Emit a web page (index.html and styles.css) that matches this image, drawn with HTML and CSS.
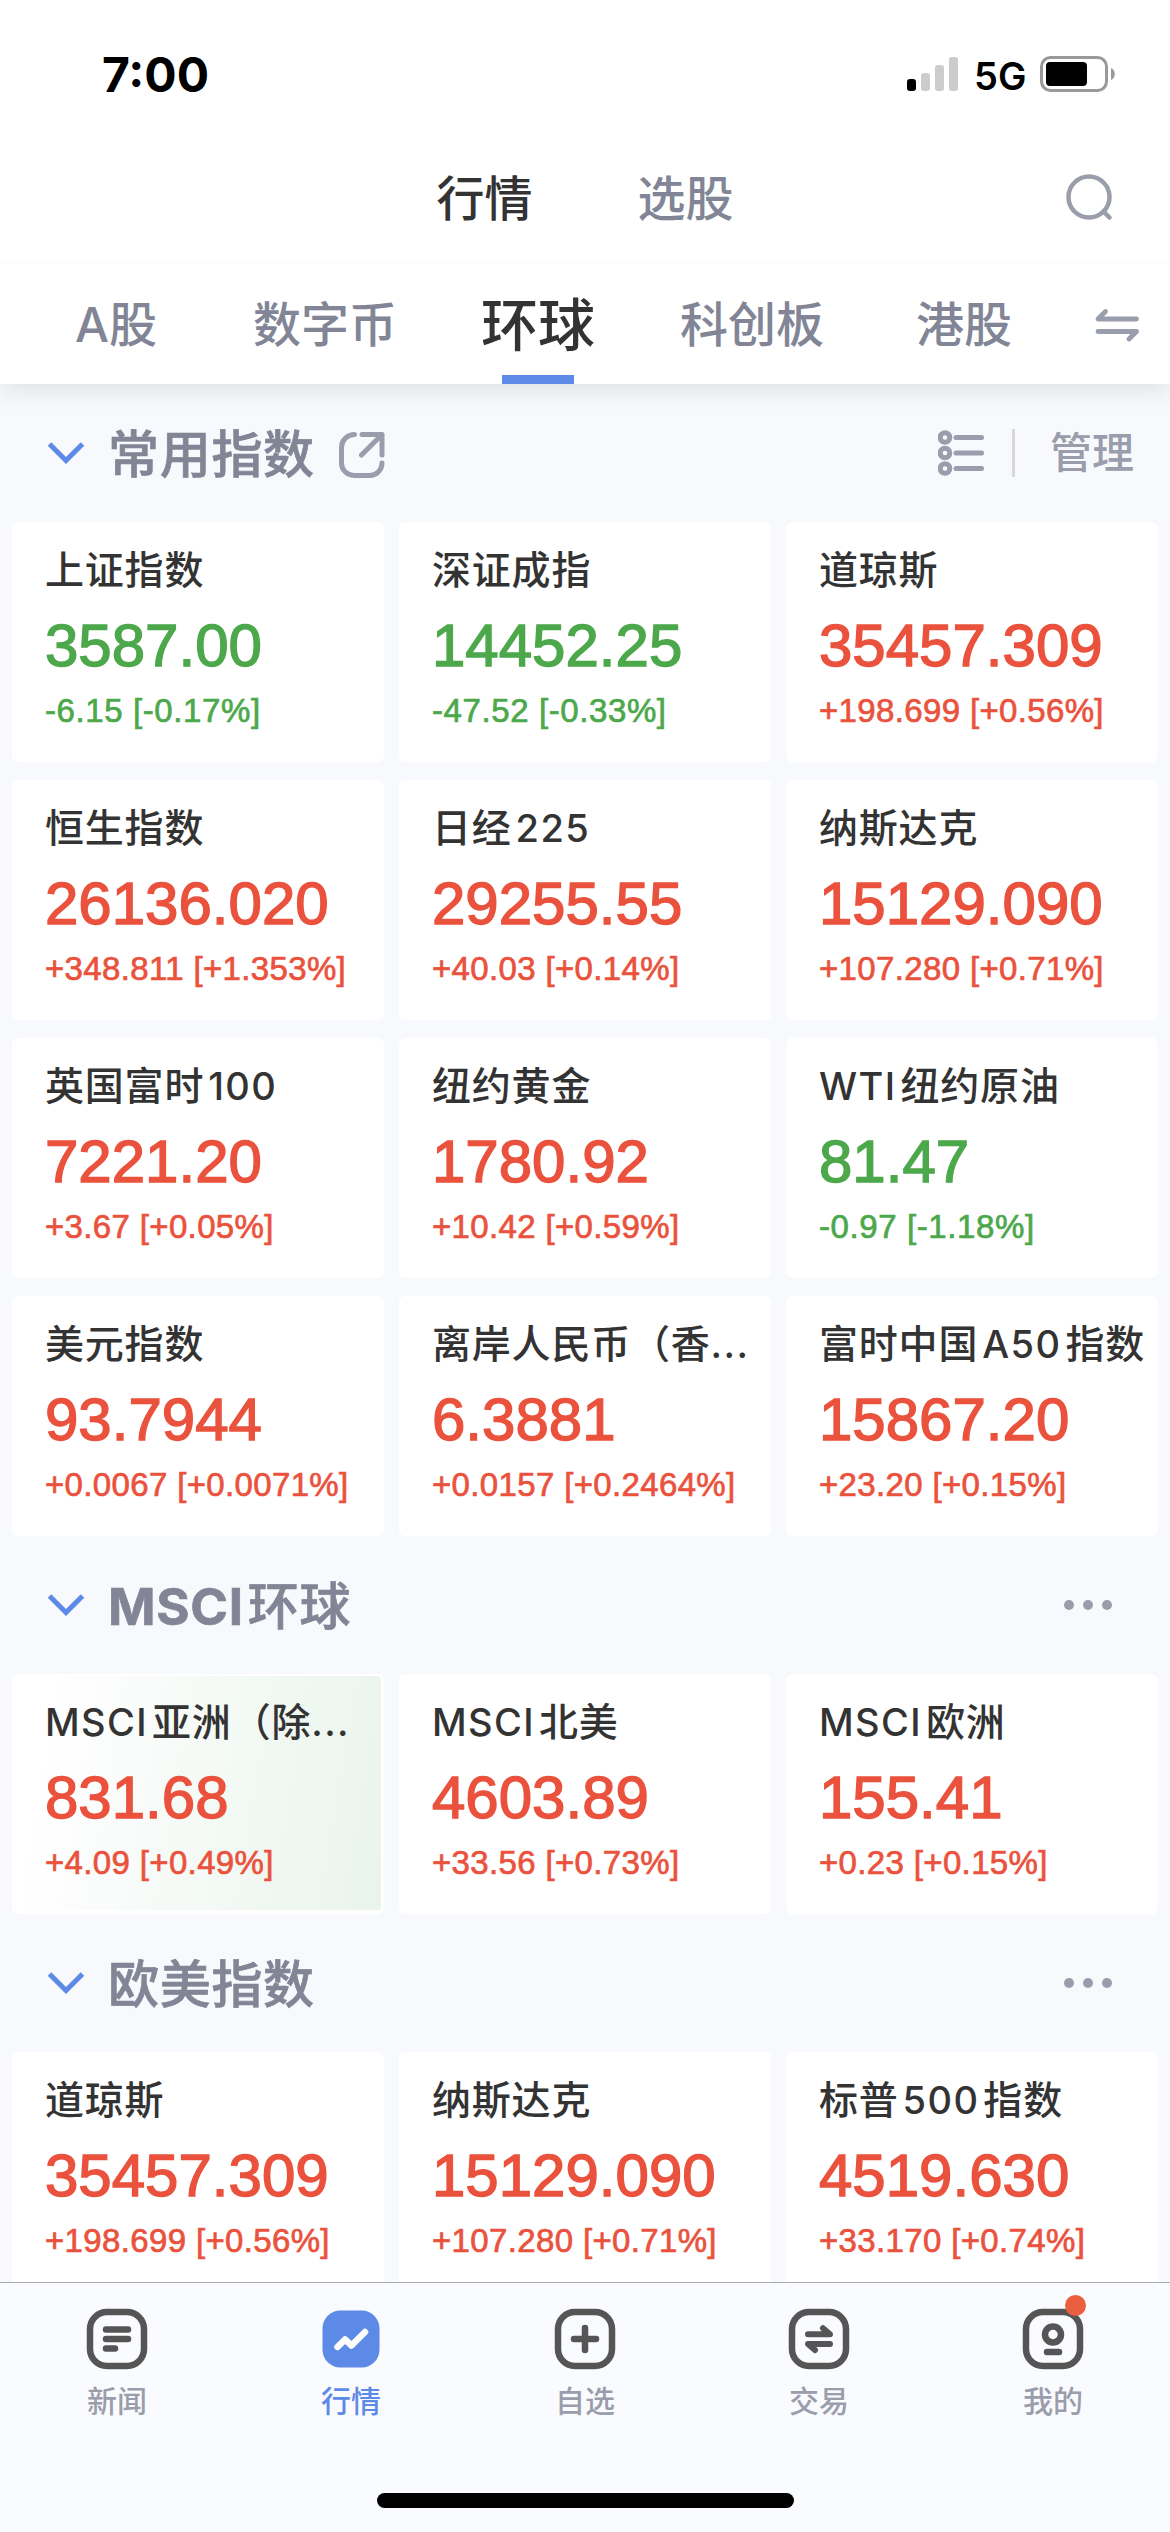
FILE: index.html
```
<!DOCTYPE html>
<html lang="zh-CN">
<head>
    <meta charset="UTF-8">
    <meta name="viewport" content="width=device-width, initial-scale=1.0">
    <title>行情</title>
    <link rel="stylesheet" href="styles.css">
</head>
<body>
<div class="app">
    <div class="status">
        <span class="time">7:00</span>
        <div class="status-right">
            <svg class="signal" width="51" height="34" viewBox="0 0 51 34">
                <rect x="0" y="22" width="9" height="12" rx="3" fill="#000"/>
                <rect x="14" y="16" width="9" height="18" rx="3" fill="#ccc"/>
                <rect x="28" y="8" width="9" height="26" rx="3" fill="#ccc"/>
                <rect x="42" y="0" width="9" height="34" rx="3" fill="#ccc"/>
            </svg>
            <span class="net">5G</span>
            <svg class="battery" width="75" height="36" viewBox="0 0 75 36">
                <rect x="1.5" y="1.5" width="65" height="33" rx="9" fill="none" stroke="#999" stroke-width="3"/>
                <rect x="6" y="6" width="41" height="24" rx="4" fill="#000"/>
                <path d="M71 12c5 2 5 10 0 12z" fill="#999"/>
            </svg>
        </div>
    </div>

    <div class="nav">
        <span class="nav-item active">行情</span>
        <span class="nav-item">选股</span>
        <svg class="search" width="48" height="48" viewBox="0 0 48 48" fill="none" stroke="#9a9dab" stroke-width="4.5" stroke-linecap="round">
            <circle cx="24" cy="23" r="20.500"/>
            <path d="M38.500 37.500L44.500 43.500"/>
        </svg>
    </div>

    <div class="tabs">
        <span class="tab"><span class="en">A</span>股</span>
        <span class="tab">数字币</span>
        <span class="tab active">环球</span>
        <span class="tab">科创板</span>
        <span class="tab">港股</span>
        <svg class="swap" width="46" height="36" viewBox="0 0 46 36" fill="none" stroke="#9a9dab" stroke-width="4.8" stroke-linecap="round" stroke-linejoin="round">
            <path d="M42.500 13H4L11.500 5.500"/>
            <path d="M4 25.500H42.500L35 33"/>
        </svg>
    </div>

    <div class="main">
        <div class="section-head">
            <svg class="arrow" width="38" height="24" viewBox="0 0 38 24"><path d="M2.500 3L19 19.500L35.500 3"/></svg>
            <h2>常用指数</h2>
            <svg class="open" width="46" height="46" viewBox="0 0 46 46">
                <path d="M15.500 2.500A13 13 0 0 0 2.500 15.500V31A12.500 12.500 0 0 0 15 43.500H31A12.500 12.500 0 0 0 43 31"/>
                <path d="M23 2.500H43V23M43 2.500L22.500 23"/>
            </svg>
            <div class="tools">
                <svg class="list" width="46" height="46" viewBox="0 0 46 46">
                    <circle cx="7" cy="7.500" r="4.800"/><circle cx="7" cy="23" r="4.800"/><circle cx="7" cy="38.500" r="4.800"/>
                    <path d="M18 7.500H43.500M18 23H43.500M18 38.500H43.500"/>
                </svg>
                <span class="line"></span>
                <span class="manage">管理</span>
            </div>
        </div>
        <div class="grid">
            <div class="card down"><div class="name">上证指数</div><div class="price">3587.00</div><div class="change">-6.15 [-0.17%]</div></div>
            <div class="card down"><div class="name">深证成指</div><div class="price">14452.25</div><div class="change">-47.52 [-0.33%]</div></div>
            <div class="card"><div class="name">道琼斯</div><div class="price">35457.309</div><div class="change">+198.699 [+0.56%]</div></div>
            <div class="card"><div class="name">恒生指数</div><div class="price">26136.020</div><div class="change">+348.811 [+1.353%]</div></div>
            <div class="card"><div class="name">日经<span class="en gap-l">225</span></div><div class="price">29255.55</div><div class="change">+40.03 [+0.14%]</div></div>
            <div class="card"><div class="name">纳斯达克</div><div class="price">15129.090</div><div class="change">+107.280 [+0.71%]</div></div>
            <div class="card"><div class="name">英国富时<span class="en gap-l">100</span></div><div class="price">7221.20</div><div class="change">+3.67 [+0.05%]</div></div>
            <div class="card"><div class="name">纽约黄金</div><div class="price">1780.92</div><div class="change">+10.42 [+0.59%]</div></div>
            <div class="card down"><div class="name"><span class="en gap-r">WTI</span>纽约原油</div><div class="price">81.47</div><div class="change">-0.97 [-1.18%]</div></div>
            <div class="card"><div class="name">美元指数</div><div class="price">93.7944</div><div class="change">+0.0067 [+0.0071%]</div></div>
            <div class="card"><div class="name">离岸人民币（香<span class="en">...</span></div><div class="price">6.3881</div><div class="change">+0.0157 [+0.2464%]</div></div>
            <div class="card"><div class="name">富时中国<span class="en gap-l gap-r">A50</span>指数</div><div class="price">15867.20</div><div class="change">+23.20 [+0.15%]</div></div>
        </div>

        <div class="section-head">
            <svg class="arrow" width="38" height="24" viewBox="0 0 38 24"><path d="M2.500 3L19 19.500L35.500 3"/></svg>
            <h2><span class="en gap-r">MSCI</span>环球</h2>
            <div class="more"><i></i><i></i><i></i></div>
        </div>
        <div class="grid">
            <div class="card flash"><div class="name"><span class="en gap-r">MSCI</span>亚洲（除<span class="en">...</span></div><div class="price">831.68</div><div class="change">+4.09 [+0.49%]</div></div>
            <div class="card"><div class="name"><span class="en gap-r">MSCI</span>北美</div><div class="price">4603.89</div><div class="change">+33.56 [+0.73%]</div></div>
            <div class="card"><div class="name"><span class="en gap-r">MSCI</span>欧洲</div><div class="price">155.41</div><div class="change">+0.23 [+0.15%]</div></div>
        </div>

        <div class="section-head">
            <svg class="arrow" width="38" height="24" viewBox="0 0 38 24"><path d="M2.500 3L19 19.500L35.500 3"/></svg>
            <h2>欧美指数</h2>
            <div class="more"><i></i><i></i><i></i></div>
        </div>
        <div class="grid">
            <div class="card"><div class="name">道琼斯</div><div class="price">35457.309</div><div class="change">+198.699 [+0.56%]</div></div>
            <div class="card"><div class="name">纳斯达克</div><div class="price">15129.090</div><div class="change">+107.280 [+0.71%]</div></div>
            <div class="card"><div class="name">标普<span class="en gap-l gap-r">500</span>指数</div><div class="price">4519.630</div><div class="change">+33.170 [+0.74%]</div></div>
        </div>
    </div>

    <div class="tabbar">
        <div class="bar-items">
            <div class="bar-item">
                <svg width="62" height="62" viewBox="0 0 62 62">
                    <rect x="4" y="4" width="54" height="54" rx="17"/>
                    <path d="M20 21.500H42M20 31H42M20 40.500H29"/>
                </svg>
                <span>新闻</span>
            </div>
            <div class="bar-item active">
                <svg width="62" height="62" viewBox="0 0 62 62">
                    <rect x="2.500" y="2.500" width="57" height="57" rx="18"/>
                    <path d="M17.500 39L25 31.500L31.500 37.500L45 24"/>
                </svg>
                <span>行情</span>
            </div>
            <div class="bar-item">
                <svg width="62" height="62" viewBox="0 0 62 62">
                    <rect x="4" y="4" width="54" height="54" rx="17"/>
                    <path d="M31 20V42M20 31H42"/>
                </svg>
                <span>自选</span>
            </div>
            <div class="bar-item">
                <svg width="62" height="62" viewBox="0 0 62 62">
                    <rect x="4" y="4" width="54" height="54" rx="17"/>
                    <path stroke-width="6" d="M20 26.300H42L35 20.300M42 36H20L27 42"/>
                </svg>
                <span>交易</span>
            </div>
            <div class="bar-item">
                <svg width="62" height="62" viewBox="0 0 62 62">
                    <rect x="4" y="4" width="54" height="54" rx="17"/>
                    <circle cx="31" cy="26.500" r="8"/>
                    <path d="M25 44H37"/>
                </svg>
                <span>我的</span>
                <i class="dot"></i>
            </div>
        </div>
        <div class="home"></div>
    </div>
</div>
</body>
</html>
```
FILE: styles.css
```
* {
    box-sizing: border-box;
}
body {
    margin: 0;
    background-color: #f8f9fc;
    font-family: "Noto Sans CJK SC", sans-serif;
}
svg {
    display: block;
    flex: none;
}
.app {
    width: 1170px;
    height: 2532px;
    display: flex;
    flex-direction: column;
    overflow: hidden;
}
.en {
    font-family: Inter, "Liberation Sans", sans-serif;
}
.gap-l {
    margin-left: 4px;
}
.gap-r {
    margin-right: 4px;
}

/* 状态栏 */
.status {
    height: 134px;
    background: #fff;
    display: flex;
    justify-content: space-between;
    align-items: center;
    padding: 14px 55px 0 102px;
    font-family: Inter, sans-serif;
    color: #000;
}
.time {
    font-size: 48px;
    font-weight: 700;
}
.status-right {
    display: flex;
    align-items: center;
}
.net {
    font-size: 38px;
    font-weight: 600;
    width: 82px;
    padding-left: 16px;
    line-height: 40px;
    margin-top: 4px;
}

/* 顶部导航 */
.nav {
    position: relative;
    height: 128px;
    background: #fff;
    display: flex;
    justify-content: center;
    align-items: center;
    gap: 105px;
    padding-bottom: 6px;
    font-size: 48px;
    font-weight: 500;
    color: #818595;
    z-index: 2;
}
.nav-item.active {
    color: #333;
}
.search {
    position: absolute;
    right: 57px;
    top: 40px;
}

/* 市场分类 */
.tabs {
    position: relative;
    height: 122px;
    background: #fff;
    display: flex;
    align-items: center;
    padding-left: 75px;
    font-size: 48px;
    font-weight: 500;
    color: #818595;
    border-top: 1px solid #fbfbfb;
    box-shadow: 0 6px 24px rgba(0, 0, 0, 0.1);
    z-index: 1;
}
.tab {
    height: 100%;
    line-height: 116px;
    margin-right: 96px;
    white-space: nowrap;
}
.tab:nth-child(2) {
    margin-right: 84px;
}
.tab.active {
    position: relative;
    font-size: 57px;
    color: #333;
    margin-right: 85px;
}
.tab:nth-child(4) {
    margin-right: 92px;
}
.tab:nth-child(5) {
    margin-right: 82px;
}
.tab.active::after {
    content: "";
    position: absolute;
    left: 50%;
    bottom: 0;
    width: 72px;
    height: 9px;
    margin-left: -36px;
    background: #5c8ae6;
}

.main {
    flex: 1;
    min-height: 0;
    overflow: hidden;
}
.section-head {
    height: 138px;
    display: flex;
    align-items: center;
    padding: 0 36px 0 47px;
}
.section-head h2 {
    margin: 0 24px 5px 23px;
    font-size: 51px;
    font-weight: 500;
    letter-spacing: 0.7px;
    -webkit-text-stroke: 0.7px currentColor;
    color: #818595;
}
.section-head .en {
    font-size: 51px;
    font-weight: 700;
}
.arrow {
    fill: none;
    stroke: #5c8ae6;
    stroke-width: 5;
}
.open {
    fill: none;
    stroke: #9a9dab;
    stroke-width: 5;
    stroke-linecap: round;
    stroke-linejoin: round;
    margin-top: 3px;
}
.list {
    fill: none;
    stroke: #9a9dab;
    stroke-width: 5;
    stroke-linecap: round;
}
.tools {
    margin-left: auto;
    display: flex;
    align-items: center;
}
.line {
    width: 3px;
    height: 48px;
    background: #d8d8d8;
    margin: 0 35px 0 28px;
}
.manage {
    margin-bottom: 6px;
    font-size: 42px;
    line-height: 60px;
    font-weight: 500;
    color: #9a9dab;
}
.more {
    margin-left: auto;
    margin-right: 22px;
    display: flex;
    gap: 9px;
}
.more i {
    width: 10px;
    height: 10px;
    border-radius: 50%;
    background: #9a9dab;
}

/* 指数卡片 */
.grid {
    display: grid;
    grid-template-columns: repeat(3, 372px);
    grid-auto-rows: 240px;
    gap: 18px 15px;
    padding: 0 12px;
}
.card {
    background: #fff;
    border-radius: 6px;
    padding: 18px 0 0 33px;
    color: #ea523d;
    white-space: nowrap;
}
.card.down {
    color: #4ca84b;
}
.card.flash {
    border: 2px solid #fff;
    border-bottom-width: 4px;
    border-right-width: 3px;
    padding: 16px 0 0 31px;
    background: linear-gradient(100deg, #fff 10%, #e9f4ec 100%);
}
.name {
    font-size: 39px;
    font-weight: 500;
    line-height: 54px;
    height: 54px;
    letter-spacing: 0.8px;
    color: #333;
    margin-bottom: 16px;
}
.name .en {
    font-size: 38px;
    letter-spacing: 1.4px;
}
.price {
    font-family: "Liberation Sans", Arial, sans-serif;
    font-size: 60px;
    line-height: 72px;
    -webkit-text-stroke: 1.4px currentColor;
    margin-bottom: 8px;
}
.change {
    font-family: "Liberation Sans", Arial, sans-serif;
    font-size: 33px;
    line-height: 42px;
    letter-spacing: 0.35px;
    -webkit-text-stroke: 0.7px currentColor;
}
.down .change {
    letter-spacing: 0.6px;
}

/* 底部菜单 */
.tabbar {
    height: 250px;
    background: #fafbfe;
    border-top: 1px solid #a9abae;
    display: flex;
    flex-direction: column;
    justify-content: space-between;
    align-items: center;
    padding: 25px 0 24px;
}
.bar-items {
    display: flex;
    width: 100%;
}
.bar-item {
    position: relative;
    flex: 1;
    display: flex;
    flex-direction: column;
    align-items: center;
    font-size: 30px;
    line-height: 40px;
    color: #9a9dab;
}
.bar-item span {
    margin-top: 9px;
    font-weight: 500;
}
.bar-item svg {
    fill: none;
    stroke: #555;
    stroke-width: 6.5;
    stroke-linecap: round;
    stroke-linejoin: round;
}
.bar-item.active {
    color: #5c8ae6;
}
.bar-item.active rect {
    fill: #5c8ae6;
    stroke: none;
}
.bar-item.active svg {
    stroke: #fff;
}
.dot {
    position: absolute;
    left: 129px;
    top: -13px;
    width: 21px;
    height: 21px;
    border-radius: 50%;
    background: #ea603f;
}
.home {
    width: 417px;
    height: 15px;
    border-radius: 8px;
    background: #000;
}
```
